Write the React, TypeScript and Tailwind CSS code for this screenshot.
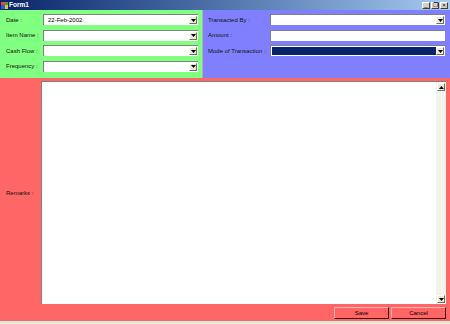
import React from "react";

const Arrow = ({ dir = "down" }: { dir?: "down" | "up" }) => (
  <div className="w-[8px] h-[8px] shrink-0 bg-[#ece9d8] border border-t-white border-l-white border-r-[#716f64] border-b-[#716f64] flex items-center justify-center">
    <svg width="5" height="3" viewBox="0 0 5 3">
      {dir === "down" ? <path d="M0 0H5L2.5 3Z" fill="#000" /> : <path d="M0 3H5L2.5 0Z" fill="#000" />}
    </svg>
  </div>
);

const Combo = ({ value = "", dark = false }: { value?: string; dark?: boolean }) => (
  <div className="h-[11px] bg-white border-t border-l border-t-[#808080] border-l-[#808080] flex items-center pl-[1px] pr-[1px]">
    <div className={`flex-1 h-[8px] flex items-center ${dark ? "bg-[#0a246a]" : ""} text-[6px] leading-none pl-[3px] whitespace-nowrap`}>{value}</div>
    <Arrow />
  </div>
);

const TextBox = () => <div className="h-[11px] bg-white border-t border-l border-t-[#808080] border-l-[#808080]" />;

const Label = ({ children }: { children: React.ReactNode }) => (
  <div className="text-[6px] leading-none text-[#101010] whitespace-nowrap">{children}</div>
);

export default function App() {
  return (
    <div className="w-[450px] h-[324px] flex flex-col overflow-hidden" style={{ fontFamily: '"Liberation Sans", Arial, sans-serif' }}>
      <div className="h-[10px] bg-gradient-to-r from-[#0a246a] to-[#a6caf0] flex items-center justify-between pl-[1px] pr-[2px]">
        <div className="flex items-center gap-[1px]">
          <div className="w-[7px] h-[7px] grid grid-cols-2">
            <div className="bg-[#e94a2a]" />
            <div className="bg-[#4aa02a]" />
            <div className="bg-[#2a5ae9]" />
            <div className="bg-[#f2c02a]" />
          </div>
          <span className="text-white font-bold text-[6.5px] leading-none">Form1</span>
        </div>
        <div className="flex gap-[1px]">
          {["_", "❐", "×"].map((c, i) => (
            <div key={i} className="w-[8px] h-[7px] bg-[#d4d0c8] border border-t-white border-l-white border-r-[#404040] border-b-[#404040] text-[6px] leading-none flex items-center justify-center text-black">{c}</div>
          ))}
        </div>
      </div>
      <div className="h-[68px] flex">
        <div className="w-[203px] shrink-0 bg-[#80ff80] border-r border-[#b0b0b0] grid grid-cols-[37px_155px] content-start gap-y-[4.5px] pt-[4px] pl-[6px]">
          {[
            ["Date :", "22-Feb-2002"],
            ["Item Name :", ""],
            ["Cash Flow :", ""],
            ["Frequency :", ""],
          ].map(([l, v]) => (
            <React.Fragment key={l}>
              <div className="flex items-center"><Label>{l}</Label></div>
              <Combo value={v} />
            </React.Fragment>
          ))}
        </div>
        <div className="flex-1 bg-[#8080ff] grid grid-cols-[62px_175px] content-start gap-y-[4.5px] pt-[4px] pl-[5px]">
          <div className="flex items-center"><Label>Transacted By :</Label></div>
          <Combo />
          <div className="flex items-center"><Label>Amount :</Label></div>
          <TextBox />
          <div className="flex items-center"><Label>Mode of Transaction :</Label></div>
          <Combo dark />
        </div>
      </div>
      <div className="flex-1 bg-[#ff6666] flex flex-col pt-[3px] pr-[4px] pb-[1px]">
        <div className="flex-1 flex">
          <div className="w-[41px] flex items-center pl-[6px]"><Label>Remarks :</Label></div>
          <div className="flex-1 bg-white border-t border-l border-t-[#808080] border-l-[#808080] flex justify-end">
            <div className="w-[10px] bg-[#f4f3ee] flex flex-col justify-between items-center py-[1px]">
              <Arrow dir="up" />
              <Arrow dir="down" />
            </div>
          </div>
        </div>
        <div className="h-[16px] flex justify-end items-center gap-[2px] pt-[2px]">
          {["Save", "Cancel"].map((b) => (
            <div key={b} className="w-[55px] h-[12px] bg-[#ff6666] border border-t-[#ffb0b0] border-l-[#ffb0b0] border-r-[#400000] border-b-[#400000] flex items-center justify-center text-[6px] leading-none text-black">{b}</div>
          ))}
        </div>
      </div>
      <div className="h-[3px] bg-[#ece9d8]" />
    </div>
  );
}
